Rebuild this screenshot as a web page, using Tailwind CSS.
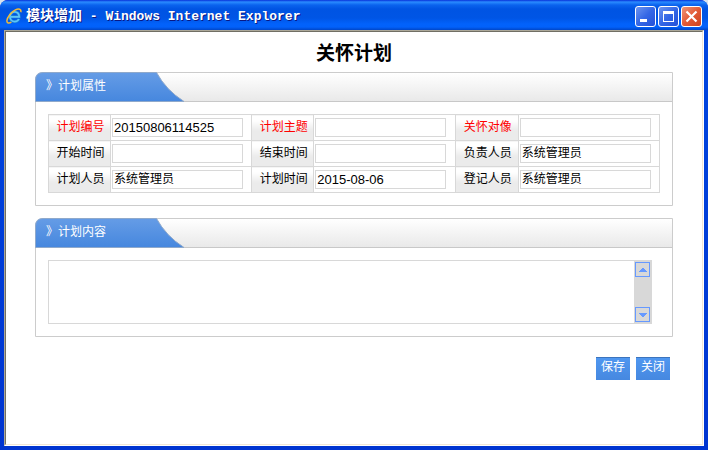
<!DOCTYPE html>
<html lang="zh-CN">
<head>
    <meta charset="UTF-8">
    <meta name="viewport" content="width=device-width, initial-scale=1.0">
    <title>模块增加</title>
    <script src="https://cdn.jsdelivr.net/npm/@tailwindcss/browser@4"></script>
    <style>
        body {
            font-family: "Liberation Sans", "Noto Sans CJK SC", sans-serif;
        }
        .title-bar {
            background: linear-gradient(to bottom, #0831d9 0, #2a8bff 2px, #0a63ee 5px, #0054e3 9px, #0055e5 18px, #0262fb 24px, #0261fa 27px, #0046c8 30px);
        }
        .title-text {
            font-family: "Liberation Mono", "Noto Sans CJK SC", monospace;
            text-shadow: 1px 1px 0 #0a1883;
        }
    </style>
</head>
<body class="bg-[#d9e3ee] text-xs text-black">
    <div class="flex flex-col h-screen rounded-t-lg overflow-hidden bg-[#0831d9]">

        <!-- Barra de título -->
        <header class="title-bar flex items-center h-[30px] shrink-0 px-1.5 pt-0.5">
            <svg class="w-4 h-4 shrink-0" viewBox="0 0 16 16" fill="none">
                <path d="M5 8.800H13.200C13.200 5.700 11.300 3.800 8.700 3.800C5.900 3.800 4 5.900 4 8.700C4 11.600 6 13.600 8.700 13.600C10.700 13.600 12.200 12.600 12.900 11" stroke="#1c7fd0" stroke-width="3"/>
                <path d="M5 8.800H13.200C13.200 5.700 11.300 3.800 8.700 3.800C5.900 3.800 4 5.900 4 8.700C4 11.600 6 13.600 8.700 13.600C10.700 13.600 12.200 12.600 12.900 11" stroke="#5cc4fa" stroke-width="1.800"/>
                <path d="M14.800 4.200C15.600 1.200 12.800 .2 9.400 1.900C5.200 4 1.300 9.200 .9 12.700C.7 15.200 2.900 15.600 5.400 14.200" stroke="#f0b93a" stroke-width="1.500"/>
            </svg>
            <span class="title-text grow pl-1 text-[13px] leading-4 font-bold text-white whitespace-pre"><span class="text-sm leading-4">模块增加</span> - Windows Internet Explorer</span>
            <div class="flex gap-0.5">
                <button type="button" aria-label="最小化" class="w-[21px] h-[21px] rounded-[3px] border border-white bg-linear-to-br from-[#6d93ee] via-[#3467e6] to-[#2450d8]">
                    <svg class="w-[19px] h-[19px]" viewBox="0 0 19 19"><path d="M4 12h7v3H4z" fill="#fff"/></svg>
                </button>
                <button type="button" aria-label="最大化" class="w-[21px] h-[21px] rounded-[3px] border border-white bg-linear-to-br from-[#6d93ee] via-[#3467e6] to-[#2450d8]">
                    <svg class="w-[19px] h-[19px]" viewBox="0 0 19 19"><path d="M4 4h11v11H4zM5 7v7h9V7z" fill="#fff" fill-rule="evenodd"/></svg>
                </button>
                <button type="button" aria-label="关闭窗口" class="w-[21px] h-[21px] rounded-[3px] border border-white bg-linear-to-br from-[#ee9478] via-[#e25a36] to-[#cc4420]">
                    <svg class="w-[19px] h-[19px]" viewBox="0 0 19 19"><path d="M4.500 4.500l10 10M14.500 4.500l-10 10" stroke="#fff" stroke-width="2.200"/></svg>
                </button>
            </div>
        </header>

        <!-- Contenido de la ventana -->
        <div class="grow flex px-1 pb-1 bg-linear-to-b from-[#0046e0] to-[#0034d0]">
            <div class="grow flex border border-t-[#aca899] border-l-[#aca899] border-r-white border-b-white">
                <main class="grow bg-white border border-t-[#716f64] border-l-[#716f64] border-r-[#f1e6d5] border-b-[#f1e6d5] px-[29px] pt-2.5">
                    <h1 class="text-center text-[19px] leading-6 font-bold">关怀计划</h1>

                    <form>
                        <section class="mt-1.5 border border-[#cccccc] rounded-tl-lg">
                            <div class="h-[29px] border-b border-[#c8c8c8] rounded-tl-lg bg-linear-to-b from-white to-[#e9e9e9]">
                                <div class="relative h-[29px] w-[150px]">
                                    <svg class="absolute -left-px -top-px w-[150px] h-[30px]" viewBox="0 0 150 30">
                                        <defs>
                                            <linearGradient id="tab" x1="0" y1="0" x2="0" y2="1">
                                                <stop offset="0" stop-color="#659ce6"/>
                                                <stop offset="1" stop-color="#4687de"/>
                                            </linearGradient>
                                        </defs>
                                        <path d="M.5 29.500V8Q.5.5 8 .5H121.500Q131 18 149 29.500Z" fill="url(#tab)" stroke="#8fa9cb"/>
                                    </svg>
                                    <h2 class="relative pl-2.5 pt-1 leading-[18px] text-white">》计划属性</h2>
                                </div>
                            </div>
                            <div class="p-3">
                                <table class="w-full table-fixed border-collapse">
                                    <colgroup>
                                        <col class="w-[62px]"><col>
                                        <col class="w-[62px]"><col>
                                        <col class="w-[63px]"><col>
                                    </colgroup>
                                    <tbody>
                                        <tr class="h-[26px]">
                                            <th class="border border-[#d8d8d8] bg-linear-to-b from-white from-20% to-[#ebebeb] to-60% pb-0.5 pl-0.5 font-normal text-[#ff0000]"><label for="no">计划编号</label></th>
                                            <td class="border border-[#d8d8d8]"><input id="no" value="20150806114525" class="block ml-px w-[131px] h-[19px] border border-[#d8d8d8] px-px text-[13px]"></td>
                                            <th class="border border-[#d8d8d8] bg-linear-to-b from-white from-20% to-[#ebebeb] to-60% pb-0.5 pl-0.5 font-normal text-[#ff0000]"><label for="subject">计划主题</label></th>
                                            <td class="border border-[#d8d8d8]"><input id="subject" class="block ml-px w-[131px] h-[19px] border border-[#d8d8d8] px-px text-[13px]"></td>
                                            <th class="border border-[#d8d8d8] bg-linear-to-b from-white from-20% to-[#ebebeb] to-60% pb-0.5 pl-0.5 font-normal text-[#ff0000]"><label for="target">关怀对像</label></th>
                                            <td class="border border-[#d8d8d8]"><input id="target" class="block ml-px w-[131px] h-[19px] border border-[#d8d8d8] px-px text-[13px]"></td>
                                        </tr>
                                        <tr class="h-[26px]">
                                            <th class="border border-[#d8d8d8] bg-linear-to-b from-white from-20% to-[#ebebeb] to-60% pb-0.5 pl-0.5 font-normal"><label for="start">开始时间</label></th>
                                            <td class="border border-[#d8d8d8]"><input id="start" class="block ml-px w-[131px] h-[19px] border border-[#d8d8d8] px-px text-[13px]"></td>
                                            <th class="border border-[#d8d8d8] bg-linear-to-b from-white from-20% to-[#ebebeb] to-60% pb-0.5 pl-0.5 font-normal"><label for="end">结束时间</label></th>
                                            <td class="border border-[#d8d8d8]"><input id="end" class="block ml-px w-[131px] h-[19px] border border-[#d8d8d8] px-px text-[13px]"></td>
                                            <th class="border border-[#d8d8d8] bg-linear-to-b from-white from-20% to-[#ebebeb] to-60% pb-0.5 pl-0.5 font-normal"><label for="owner">负责人员</label></th>
                                            <td class="border border-[#d8d8d8]"><input id="owner" value="系统管理员" class="block ml-px w-[131px] h-[19px] border border-[#d8d8d8] px-px pb-1 text-xs"></td>
                                        </tr>
                                        <tr class="h-[26px]">
                                            <th class="border border-[#d8d8d8] bg-linear-to-b from-white from-20% to-[#ebebeb] to-60% pb-0.5 pl-0.5 font-normal"><label for="planner">计划人员</label></th>
                                            <td class="border border-[#d8d8d8]"><input id="planner" value="系统管理员" class="block ml-px w-[131px] h-[19px] border border-[#d8d8d8] px-px pb-1 text-xs"></td>
                                            <th class="border border-[#d8d8d8] bg-linear-to-b from-white from-20% to-[#ebebeb] to-60% pb-0.5 pl-0.5 font-normal"><label for="date">计划时间</label></th>
                                            <td class="border border-[#d8d8d8]"><input id="date" value="2015-08-06" class="block ml-px w-[131px] h-[19px] border border-[#d8d8d8] px-px text-[13px]"></td>
                                            <th class="border border-[#d8d8d8] bg-linear-to-b from-white from-20% to-[#ebebeb] to-60% pb-0.5 pl-0.5 font-normal"><label for="recorder">登记人员</label></th>
                                            <td class="border border-[#d8d8d8]"><input id="recorder" value="系统管理员" class="block ml-px w-[131px] h-[19px] border border-[#d8d8d8] px-px pb-1 text-xs"></td>
                                        </tr>
                                    </tbody>
                                </table>
                            </div>
                        </section>

                        <section class="mt-3 border border-[#cccccc] rounded-tl-lg">
                            <div class="h-[29px] border-b border-[#c8c8c8] rounded-tl-lg bg-linear-to-b from-white to-[#e9e9e9]">
                                <div class="relative h-[29px] w-[150px]">
                                    <svg class="absolute -left-px -top-px w-[150px] h-[30px]" viewBox="0 0 150 30">
                                        <path d="M.5 29.500V8Q.5.5 8 .5H121.500Q131 18 149 29.500Z" fill="url(#tab)" stroke="#8fa9cb"/>
                                    </svg>
                                    <h2 class="relative pl-2.5 pt-1 leading-[18px] text-white"><label for="content">》计划内容</label></h2>
                                </div>
                            </div>
                            <div class="py-3 pl-3 pr-5">
                                <div class="flex h-16 border border-[#d8d8d8]">
                                    <textarea id="content" class="grow resize-none px-px text-[13px]"></textarea>
                                    <div class="flex flex-col items-center justify-between w-[17px] py-px bg-[#d8d8d8]">
                                        <button type="button" aria-label="向上滚动" class="w-[15px] h-[15px] border border-[#6699ff]">
                                            <svg class="w-[13px] h-[13px]" viewBox="0 0 13 13"><path d="M3 9h8V8H10V7H9V6H8V5H6V6H5V7H4V8H3z" fill="#6699ff"/></svg>
                                        </button>
                                        <button type="button" aria-label="向下滚动" class="w-[15px] h-[15px] border border-[#6699ff]">
                                            <svg class="w-[13px] h-[13px]" viewBox="0 0 13 13"><path d="M3 5h8V6H10V7H9V8H8V9H6V8H5V7H4V6H3z" fill="#6699ff"/></svg>
                                        </button>
                                    </div>
                                </div>
                            </div>
                        </section>

                        <div class="flex justify-end gap-1.5 mt-5 pr-[3px]">
                            <button type="button" class="w-[34px] h-[23px] border-t border-[#3c74bd] pb-1 text-white bg-linear-to-b from-[#4f97f0] to-[#4688e0]">保存</button>
                            <button type="button" class="w-[34px] h-[23px] border-t border-[#3c74bd] pb-1 text-white bg-linear-to-b from-[#4f97f0] to-[#4688e0]">关闭</button>
                        </div>
                    </form>
                </main>
            </div>
        </div>
    </div>
</body>
</html>
